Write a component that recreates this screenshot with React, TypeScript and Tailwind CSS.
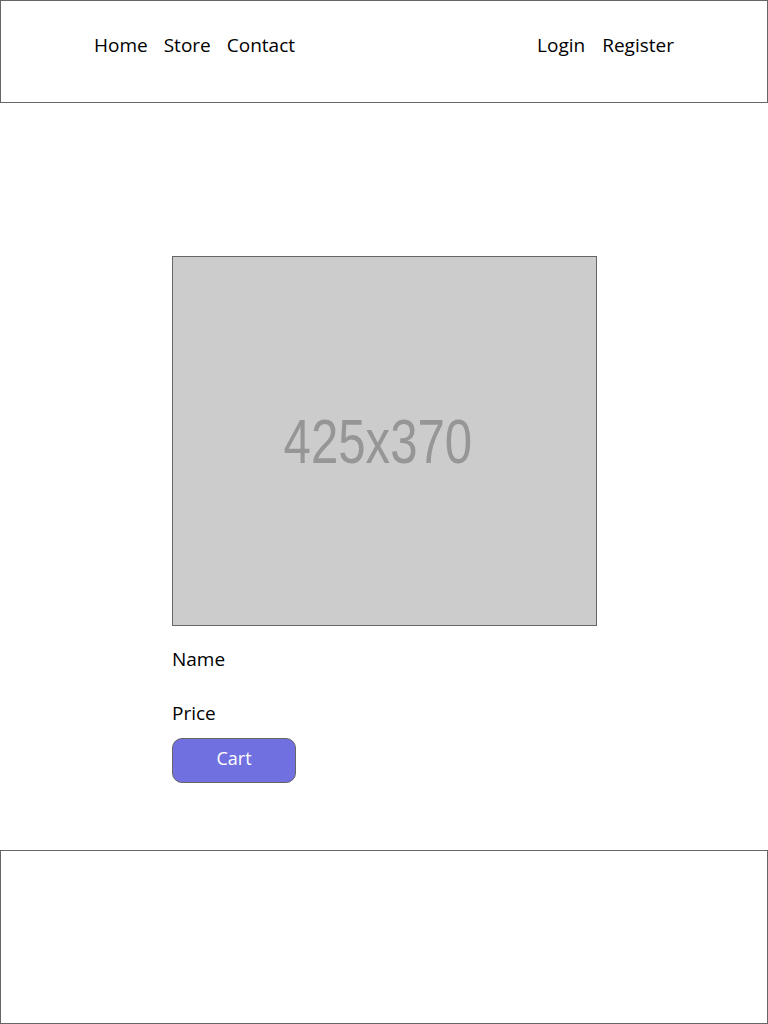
import React from "react";

const App = () => {
  return (
    <div className="w-[768px] h-[1024px] bg-white text-black font-['Open_Sans',sans-serif] text-[19px] leading-6 flex flex-col">
      <header className="h-[103px] border border-[#666] flex items-center justify-between px-[93px] pb-[14px]">
        <nav className="flex gap-[16px]">
          <a>Home</a>
          <a>Store</a>
          <a>Contact</a>
        </nav>
        <nav className="flex gap-[17px]">
          <a>Login</a>
          <a>Register</a>
        </nav>
      </header>

      <main className="pl-[172px] pt-[153px] flex flex-col items-start">
        <div className="w-[425px] h-[370px] bg-[#cccccc] border border-[#666] flex items-center justify-center overflow-hidden">
          <span className="font-['Liberation_Sans',sans-serif] text-[63px] leading-none text-[#969696] scale-x-[0.78] -ml-[14px]">
            425x370
          </span>
        </div>
        <p className="mt-[21px]">Name</p>
        <p className="mt-[30px]">Price</p>
        <button className="mt-[13px] w-[124px] h-[45px] rounded-[10px] bg-[#7070e1] border border-[#666] text-white text-[18px] pb-[5px]">
          Cart
        </button>
      </main>

      <footer className="mt-auto h-[174px] border border-[#666]"></footer>
    </div>
  );
};

export default App;
